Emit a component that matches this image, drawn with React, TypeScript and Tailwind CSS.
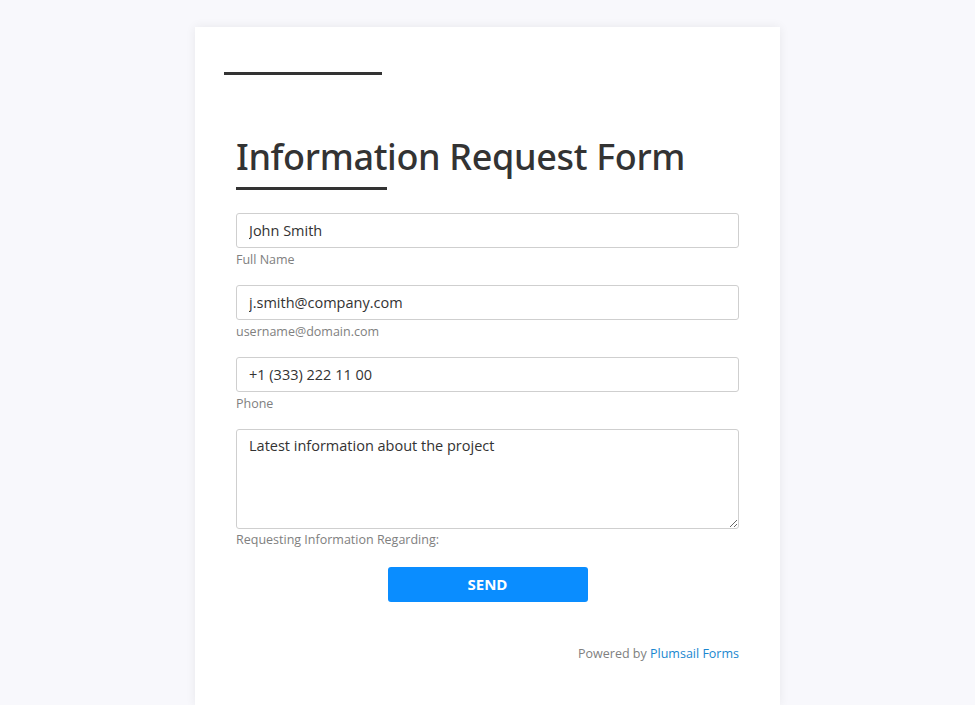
import React from 'react';

const Field: React.FC<{ value: string; hint: string }> = ({ value, hint }) => (
  <div className="flex flex-col">
    <input
      readOnly
      value={value}
      className="h-[35px] w-full rounded-[3px] border border-[#cfcfcf] bg-white px-3 text-[14.5px] text-[#333] outline-none"
    />
    <span className="mt-[4px] text-[12.5px] leading-[16px] text-[#808080]">{hint}</span>
  </div>
);

const App: React.FC = () => {
  return (
    <div
      className="flex min-h-[705px] justify-center bg-[#f8f8fc] pt-[27px]"
      style={{ fontFamily: '"Open Sans", "Noto Sans", sans-serif' }}
    >
      <div className="w-[585px] bg-white px-[41px] pb-[40px] shadow-[0_0_10px_rgba(0,0,0,0.07)]">
        <div className="ml-[-12px] mt-[45px] h-[3px] w-[158px] bg-[#333]" />

        <h1
          className="mt-[60px] text-[36px] font-medium leading-[44px] tracking-[-0.35px] text-[#333]"
          style={{ fontFamily: '"Noto Sans", "Open Sans", sans-serif' }}
        >
          Information Request Form
        </h1>
        <div className="mt-[8px] h-[3px] w-[151px] bg-[#333]" />

        <div className="mt-[23px] flex flex-col gap-[17px]">
          <Field value="John Smith" hint="Full Name" />
          <Field value="j.smith@company.com" hint="username@domain.com" />
          <Field value="+1 (333) 222 11 00" hint="Phone" />
          <div className="flex flex-col">
            <textarea
              readOnly
              value="Latest information about the project"
              className="h-[100px] w-full rounded-[3px] border border-[#cfcfcf] bg-white px-3 py-[6px] text-[14.5px] leading-[20px] text-[#333] outline-none"
            />
            <span className="mt-[3px] text-[12.5px] leading-[16px] text-[#808080]">
              Requesting Information Regarding:
            </span>
          </div>
        </div>

        <div className="mt-[19px] flex justify-center">
          <button className="h-[35px] w-[200px] rounded-[3px] bg-[#0a8dff] text-[15px] font-bold text-white">
            SEND
          </button>
        </div>

        <div className="mt-[43px] text-right text-[12.5px] text-[#808080]">
          Powered by <span className="text-[#1a87d0]">Plumsail Forms</span>
        </div>
      </div>
    </div>
  );
};

export default App;
